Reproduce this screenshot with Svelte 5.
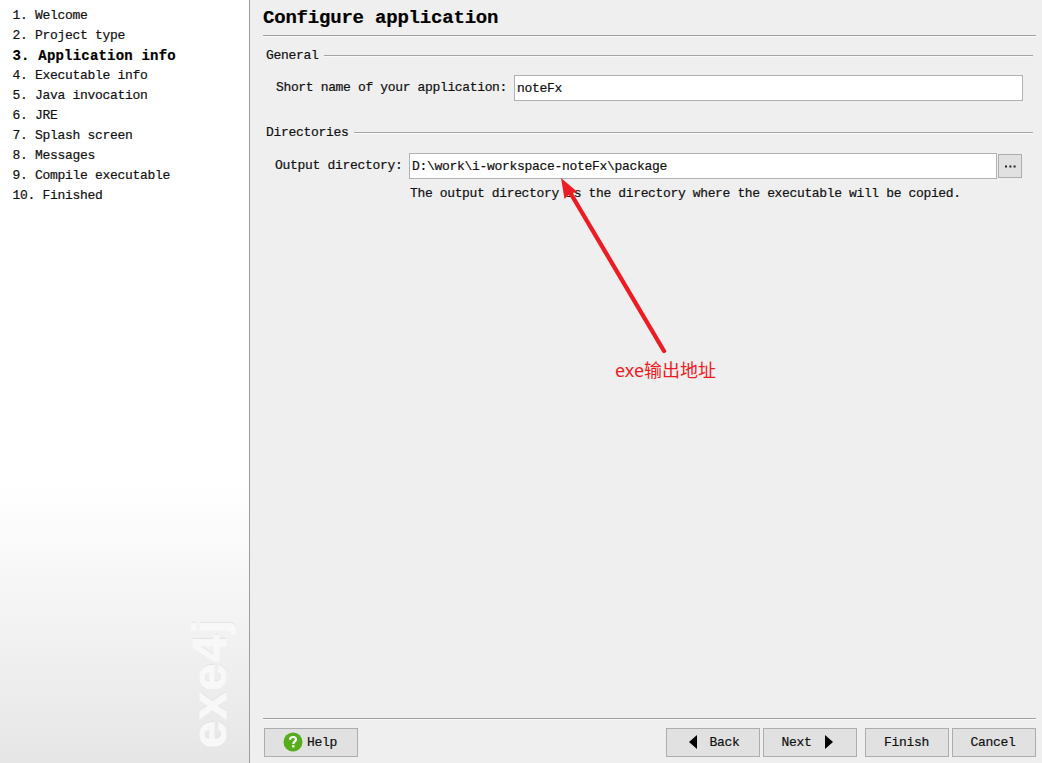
<script>
  const steps = [
    'Welcome', 'Project type', 'Application info', 'Executable info', 'Java invocation',
    'JRE', 'Splash screen', 'Messages', 'Compile executable', 'Finished'
  ];
  const current = 2;
  let shortName = $state('noteFx');
  let outputDir = $state('D:\\work\\i-workspace-noteFx\\package');
</script>

<div class="window">
  <aside>
    <ol>
      {#each steps as step, i}
        <li class:current={i === current}>{i + 1}. {step}</li>
      {/each}
    </ol>
    <div class="brand">exe4j</div>
  </aside>

  <main>
    <h1>Configure application</h1>
    <div class="content">
      <div class="group"><span>General</span><i></i></div>
      <div class="field name">
        <label for="short">Short name of your application:</label>
        <input id="short" bind:value={shortName} />
      </div>
      <div class="group second"><span>Directories</span><i></i></div>
      <div class="field dir">
        <label for="out">Output directory:</label>
        <input id="out" bind:value={outputDir} />
        <button class="browse" aria-label="Browse">
          <svg width="11" height="3" viewBox="0 0 11 3"><path d="M0 .4h2v2H0zM4.4 .4h2v2h-2zM8.6 .4h2v2h-2z" fill="#222" /></svg>
        </button>
      </div>
      <p>The output directory is the directory where the executable will be copied.</p>
    </div>
    <footer>
      <button class="wide help">
        <svg width="20" height="20" viewBox="0 0 20 20">
          <circle cx="10" cy="10" r="9.5" fill="#55ad1c" />
          <path d="M7 7.7C7 5.9 8.3 5 10 5s3 .9 3 2.5c0 2-2.7 2.2-2.7 4.4" fill="none" stroke="#fff" stroke-width="2.2" />
          <path d="M9.1 13.2h2.4v2.2H9.1z" fill="#fff" />
        </svg>
        <span>Help</span>
      </button>
      <span class="spacer"></span>
      <button class="wide back">
        <svg width="8" height="14" viewBox="0 0 8 14"><path d="M8 0v14L0 7z" /></svg>
        <span>Back</span>
      </button>
      <button class="wide next">
        <span>Next</span>
        <svg width="8" height="14" viewBox="0 0 8 14"><path d="M0 0v14l8-7z" /></svg>
      </button>
      <button class="finish">Finish</button>
      <button>Cancel</button>
    </footer>
  </main>

  <svg class="arrow" width="1042" height="763" viewBox="0 0 1042 763">
    <path d="M571 194L664 351" stroke="#ed1c24" stroke-width="4.3" stroke-linecap="round" />
    <path d="M561 178L577.5 192L570 193.5L564.5 199z" fill="#ed1c24" />
  </svg>
  <div class="note">exe输出地址</div>
</div>

<style>
  :global(body) { margin: 0; overflow: hidden; }
  .window {
    position: relative; display: flex; width: 1042px; height: 763px; overflow: hidden;
    background: #efefef; color: #111;
    font: 13px/20px "Liberation Mono", monospace; letter-spacing: -0.3px;
    -webkit-text-stroke: 0.2px;
  }
  aside {
    position: relative; box-sizing: border-box; width: 250px; flex: none;
    border-right: 1px solid #9d9d9d;
    background: linear-gradient(#fff 0, #fff 485px, #e6e6e6 763px);
  }
  ol { list-style: none; margin: 0; padding: 6px 0 0 12.5px; }
  li { height: 20px; white-space: pre; }
  .current { font-size: 14px; font-weight: bold; letter-spacing: 0.2px; color: #000; }
  .brand {
    position: absolute; left: 181px; bottom: 15px; width: 56px; height: 132px;
    writing-mode: vertical-rl; transform: rotate(180deg);
    font: bold 49px/56px "Liberation Sans", sans-serif; letter-spacing: 1.4px;
    color: #f8f8f8; -webkit-text-stroke: 1px #f8f8f8; text-shadow: 1px -0.5px 1px #d6d6d6;
  }
  main { flex: 1; display: flex; flex-direction: column; padding: 0 6px 0 13px; }
  h1 {
    margin: 0; height: 35px; border-bottom: 1px solid #a0a0a0; box-shadow: 0 1px #fafafa;
    font-size: 19px; line-height: 36px; letter-spacing: -0.2px; color: #000;
  }
  .content { flex: 1; padding: 10px 3px 0 3px; }
  .group { display: flex; align-items: center; gap: 5px; height: 20px; }
  .group i { flex: 1; height: 1px; margin-bottom: 2px; background: #a5a5a5; box-shadow: 0 1px #fafafa; }
  .second { margin-top: 22px; }
  .second i { margin-bottom: 1px; }
  .field { display: flex; align-items: center; margin: 9px 10px 0 0; height: 26px; }
  .second + .field { margin-top: 10px; }
  .name { padding-left: 10px; }
  .dir { padding-left: 9px; }
  label { white-space: nowrap; }
  .name label { width: 238px; flex: none; letter-spacing: -0.35px; }
  .dir label { width: 134px; flex: none; }
  input {
    flex: 1; min-width: 0; box-sizing: border-box; height: 26px; padding: 0 2px;
    border: 1px solid #b0b0b5; border-radius: 0; outline: none; background: #fff;
    font: inherit; letter-spacing: inherit; color: inherit;
  }
  p { margin: 5px 0 0 144px; white-space: nowrap; letter-spacing: -0.36px; }
  button {
    box-sizing: border-box; width: 84px; height: 29px; padding: 0;
    display: flex; align-items: center; justify-content: center;
    border: 1px solid #adadad; border-radius: 0; background: #e1e1e1;
    font: inherit; letter-spacing: inherit; color: #111;
  }
  .browse { width: 24px; height: 24px; margin: 0 1px 0 1px; }
  .browse svg { margin-left: 1px; }
  footer {
    display: flex; gap: 3px; height: 45px; box-sizing: border-box; padding: 9px 0 0 1px;
    border-top: 1px solid #a0a0a0; box-shadow: inset 0 1px #fafafa;
  }
  .wide { width: 94px; }
  .spacer { flex: 1; }
  .help { gap: 4px; padding-right: 2px; }
  .help svg { margin-top: -1px; }
  .back { gap: 12px; padding-left: 3px; }
  .next { gap: 13px; padding-right: 6px; }
  .wide:not(.help) svg { margin-top: -1px; }
  footer button:last-child { padding-right: 2px; }
  .finish { margin-left: 5px; padding-right: 1px; }
  .arrow { position: absolute; left: 0; top: 0; pointer-events: none; }
  .note {
    position: absolute; left: 615px; top: 357px; white-space: nowrap; color: #ed1c24;
    font: 18px/26px "Noto Sans", "Noto Sans CJK SC", sans-serif; letter-spacing: 0;
    -webkit-text-stroke: 0;
  }
</style>
